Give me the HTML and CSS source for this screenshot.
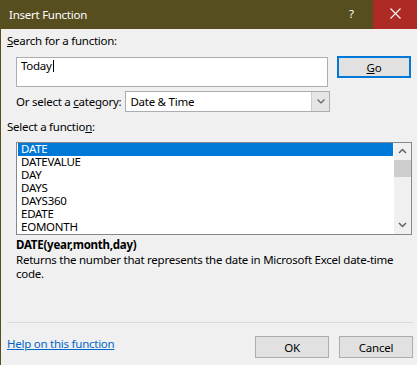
FILE: index.html
```html
<!DOCTYPE html>
<html lang="en">
<head>
  <meta charset="UTF-8">
  <title>Insert Function</title>
  <link rel="stylesheet" href="styles.css">
</head>
<body>
  <div class="window">
    <div class="titlebar">
      <span class="title">Insert Function</span>
      <span class="help">?</span>
      <span class="close">
        <svg width="11" height="11" viewBox="0 0 11 11"><path d="M0.5 0.5L10.5 10.5M10.5 0.5L0.5 10.5" stroke="#fff" stroke-width="1.1" fill="none"/></svg>
      </span>
    </div>

    <div class="content">
      <div class="label"><u>S</u>earch for a function:</div>
      <div class="search-row">
        <div class="search-box">Today<span class="caret"></span></div>
        <button class="button default"><u>G</u>o</button>
      </div>

      <div class="category-row">
        <span>Or select a <u>c</u>ategory:</span>
        <div class="select">
          <span class="select-value">Date &amp; Time</span>
          <span class="select-arrow">
            <svg width="8" height="5" viewBox="0 0 8 5"><path d="M0.5 0.5L4 4L7.5 0.5" stroke="#606060" stroke-width="1.2" fill="none"/></svg>
          </span>
        </div>
      </div>

      <div class="label list-label">Select a functio<u>n</u>:</div>
      <div class="listbox">
        <ul class="items">
          <li class="selected">DATE</li>
          <li>DATEVALUE</li>
          <li>DAY</li>
          <li>DAYS</li>
          <li>DAYS360</li>
          <li>EDATE</li>
          <li>EOMONTH</li>
        </ul>
        <div class="scrollbar">
          <svg class="arrow up" width="9" height="6" viewBox="0 0 9 6"><path d="M1 5L4.5 1.5L8 5" stroke="#606060" stroke-width="1.5" fill="none"/></svg>
          <div class="thumb"></div>
          <div class="track"></div>
          <svg class="arrow down" width="9" height="6" viewBox="0 0 9 6"><path d="M1 1L4.5 4.5L8 1" stroke="#606060" stroke-width="1.5" fill="none"/></svg>
        </div>
      </div>

      <div class="signature">DATE(year,month,day)</div>
      <div class="description">Returns the number that represents the date in Microsoft Excel date-time code.</div>

      <div class="footer">
        <a class="help-link" href="#">Help on this function</a>
        <div class="buttons">
          <button class="button">OK</button>
          <button class="button">Cancel</button>
        </div>
      </div>
    </div>
  </div>
</body>
</html>
```

FILE: styles.css
```css
body {
  margin: 0;
  font-family: "Noto Sans", "Open Sans", sans-serif;
  font-size: 11.5px;
  letter-spacing: -0.25px;
  color: #000;
  background: #f0f0f0;
}
.window {
  width: 417px;
  height: 365px;
  display: flex;
  flex-direction: column;
  overflow: hidden;
}
.titlebar {
  height: 29px;
  background: #574e1f;
  color: #fff;
  display: flex;
  align-items: center;
}
.title {
  padding-left: 9px;
  padding-bottom: 1px;
  flex: 1;
}
.help {
  width: 24px;
  padding-bottom: 2px;
}
.close {
  width: 44px;
  height: 29px;
  background: #ad2a25;
  display: flex;
  align-items: center;
  justify-content: center;
}
.close svg {
  margin-bottom: 3px;
}
.content {
  flex: 1;
  border-left: 1px solid #574e1f;
  padding: 4px 0 0 6px;
}
.label {
  line-height: 16px;
}
.search-row {
  display: flex;
  align-items: flex-start;
  margin-top: 8px;
  margin-left: 9px;
}
.search-box {
  width: 312px;
  height: 30px;
  box-sizing: border-box;
  background: #fff;
  border: 1px solid #abadb3;
  padding: 0 0 0 4px;
  line-height: 15px;
}
.caret {
  display: inline-block;
  width: 1px;
  height: 12px;
  background: #000;
  margin-left: 1px;
  vertical-align: -2px;
}
.button {
  font-family: inherit;
  font-size: 11.5px;
  letter-spacing: -0.25px;
  background: #e1e1e1;
  border: 1px solid #adadad;
  width: 74px;
  height: 22px;
  padding: 0;
  color: #000;
}
.button.default {
  border: 2px solid #0078d7;
  margin-left: 9px;
  margin-top: -1px;
}
.category-row {
  display: flex;
  align-items: center;
  margin-top: 4px;
  margin-left: 9px;
}
.select {
  margin-left: 4px;
  width: 205px;
  height: 21px;
  box-sizing: border-box;
  background: #fff;
  border: 1px solid #abadb3;
  display: flex;
  align-items: center;
}
.select-value {
  flex: 1;
  padding-left: 4px;
}
.select-arrow {
  width: 17px;
  height: 19px;
  background: #e5e5e5;
  border-left: 1px solid #cccccc;
  display: flex;
  align-items: center;
  justify-content: center;
}
.list-label {
  margin-top: 7px;
}
.listbox {
  margin: 7px 0 0 9px;
  width: 396px;
  height: 93px;
  box-sizing: border-box;
  border: 1px solid #828790;
  background: #fff;
  display: flex;
  overflow: hidden;
}
.items {
  list-style: none;
  margin: 0;
  padding: 0 1px;
  flex: 1;
}
.items li {
  height: 13px;
  line-height: 11px;
  padding-left: 3px;
}
.items li.selected {
  background: #0078d7;
  color: #fff;
}
.scrollbar {
  width: 17px;
  background: #f0f0f0;
  display: flex;
  flex-direction: column;
  align-items: center;
}
.arrow.up {
  margin: 5px 0 6px;
}
.arrow.down {
  margin: 0 0 6px;
}
.thumb {
  width: 17px;
  height: 17px;
  background: #cdcdcd;
}
.track {
  flex: 1;
}
.signature {
  font-weight: bold;
  margin: 3px 0 0 9px;
  line-height: 14px;
}
.description {
  margin: 1px 0 0 9px;
  width: 392px;
  line-height: 14px;
}
.footer {
  margin: 41px 4px 0 0;
  border-top: 1px solid #dadada;
  display: flex;
  align-items: flex-start;
  padding-top: 13px;
}
.help-link {
  color: #0066cc;
  flex: 1;
  line-height: 16px;
}
.buttons {
  display: flex;
  gap: 10px;
}
```
